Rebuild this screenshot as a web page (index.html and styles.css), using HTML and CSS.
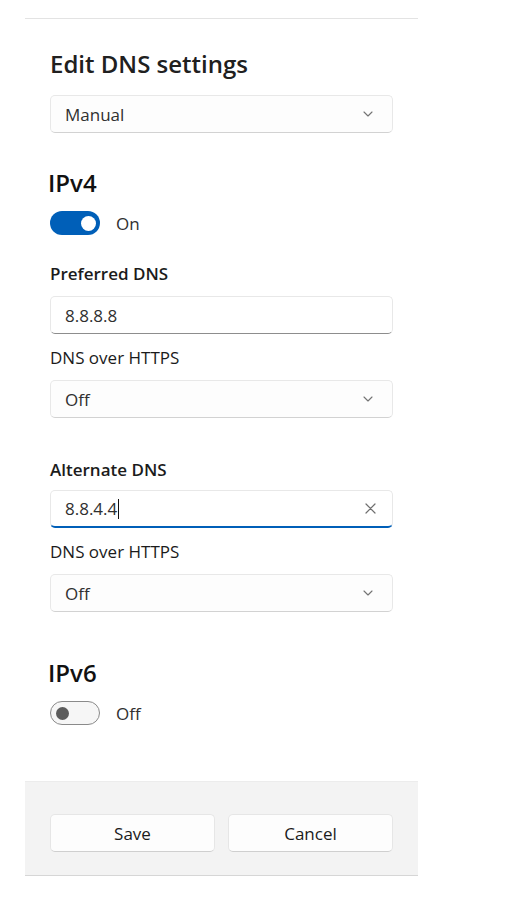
FILE: index.html
```html
<!DOCTYPE html>
<html lang="en">
<head>
<meta charset="utf-8">
<title>Edit DNS settings</title>
<link rel="stylesheet" href="styles.css">
</head>
<body>
<div class="panel">
  <div class="content">
    <h1 class="title">Edit DNS settings</h1>
    <div class="select select-top">
      <span>Manual</span>
      <svg class="chev" viewBox="0 0 10 6" width="10" height="6"><path d="M1 1 L5 5 L9 1" fill="none" stroke="#737373" stroke-width="1.1" stroke-linecap="round" stroke-linejoin="round"/></svg>
    </div>

    <h2 class="section">IPv4</h2>
    <div class="toggle-row">
      <span class="toggle on"><span class="knob"></span></span>
      <span class="toggle-text">On</span>
    </div>

    <div class="label strong first-label">Preferred DNS</div>
    <div class="input"><span>8.8.8.8</span></div>
    <div class="label">DNS over HTTPS</div>
    <div class="select">
      <span>Off</span>
      <svg class="chev" viewBox="0 0 10 6" width="10" height="6"><path d="M1 1 L5 5 L9 1" fill="none" stroke="#737373" stroke-width="1.1" stroke-linecap="round" stroke-linejoin="round"/></svg>
    </div>

    <div class="label strong alt-label">Alternate DNS</div>
    <div class="input focused"><span>8.8.4.4</span><span class="caret"></span>
      <svg class="clear" viewBox="0 0 11 11" width="11" height="11"><path d="M1 1 L10 10 M10 1 L1 10" fill="none" stroke="#6f6f6f" stroke-width="1.2" stroke-linecap="round"/></svg>
    </div>
    <div class="label">DNS over HTTPS</div>
    <div class="select">
      <span>Off</span>
      <svg class="chev" viewBox="0 0 10 6" width="10" height="6"><path d="M1 1 L5 5 L9 1" fill="none" stroke="#737373" stroke-width="1.1" stroke-linecap="round" stroke-linejoin="round"/></svg>
    </div>

    <h2 class="section section-v6">IPv6</h2>
    <div class="toggle-row">
      <span class="toggle off"><span class="knob"></span></span>
      <span class="toggle-text">Off</span>
    </div>
  </div>
  <div class="footer">
    <button class="btn">Save</button>
    <button class="btn">Cancel</button>
  </div>
</div>
</body>
</html>
```

FILE: styles.css
```css
html, body {
  margin: 0;
  padding: 0;
  background: #ffffff;
}
body {
  font-family: "Open Sans", "Noto Sans", sans-serif;
  font-size: 17px;
  color: #1b1b1b;
}
.panel {
  margin-left: 25px;
  margin-top: 18px;
  width: 393px;
  border-top: 1px solid #e3e3e3;
}
.content {
  padding: 0 25px;
  display: flex;
  flex-direction: column;
}
.title {
  margin: 30px 0 0 0;
  font-size: 24px;
  font-weight: 600;
  line-height: 30px;
  height: 30px;
  color: #202020;
}
.select, .input {
  box-sizing: border-box;
  height: 38px;
  border: 1px solid #e8e8e8;
  border-bottom-color: #d2d2d2;
  border-radius: 5px;
  background: #fdfdfd;
  display: flex;
  align-items: center;
  padding: 0 14px 0 14px;
  color: #303030;
  font-size: 17px;
}
.select {
  justify-content: space-between;
  padding-right: 19px;
  margin-top: 11px;
}
.select-top {
  margin-top: 16px;
}
.chev {
  display: block;
}
.section {
  margin: 35px 0 0 -2px;
  font-size: 24px;
  font-weight: 600;
  line-height: 30px;
  height: 30px;
  color: #111111;
}
.section-v6 {
  margin-top: 46px;
}
.toggle-row {
  margin-top: 13px;
  height: 24px;
  display: flex;
  align-items: center;
}
.toggle {
  box-sizing: border-box;
  width: 50px;
  height: 24px;
  border-radius: 12px;
  display: flex;
  align-items: center;
}
.toggle.on {
  background: #005fb8;
  justify-content: flex-end;
  padding-right: 4px;
}
.toggle.on .knob {
  width: 15px;
  height: 15px;
  border-radius: 50%;
  background: #ffffff;
}
.toggle.off {
  background: #f6f6f6;
  border: 1px solid #8a8a8a;
  padding-left: 5px;
}
.toggle.off .knob {
  width: 13px;
  height: 13px;
  border-radius: 50%;
  background: #5c5c5c;
}
.toggle-text {
  margin-left: 16px;
  color: #303030;
}
.label {
  margin-top: 13px;
  line-height: 22px;
  height: 22px;
  color: #1b1b1b;
}
.label.strong {
  font-weight: 600;
}
.first-label {
  margin-top: 28px;
}
.alt-label {
  margin-top: 41px;
}
.input {
  margin-top: 11px;
  border-bottom: 1px solid #8d8d8d;
  background: #ffffff;
}
.input.focused {
  margin-top: 9px;
  border-bottom: 2px solid #005fb8;
  padding-right: 16px;
}
.caret {
  width: 1px;
  height: 20px;
  background: #111111;
  margin-left: 1px;
}
.clear {
  margin-left: auto;
  display: block;
}
.footer {
  margin-top: 56px;
  box-sizing: border-box;
  height: 95px;
  background: #f3f3f3;
  border-top: 1px solid #ececec;
  border-bottom: 1px solid #d6d6d6;
  padding: 32px 25px 0 25px;
  display: flex;
  gap: 13px;
}
.btn {
  flex: 1;
  height: 38px;
  box-sizing: border-box;
  border: 1px solid #e6e6e6;
  border-bottom-color: #cfcfcf;
  border-radius: 5px;
  background: #fdfdfd;
  font-family: "Open Sans", "Noto Sans", sans-serif;
  font-size: 17px;
  color: #1b1b1b;
  padding: 0;
}
```
